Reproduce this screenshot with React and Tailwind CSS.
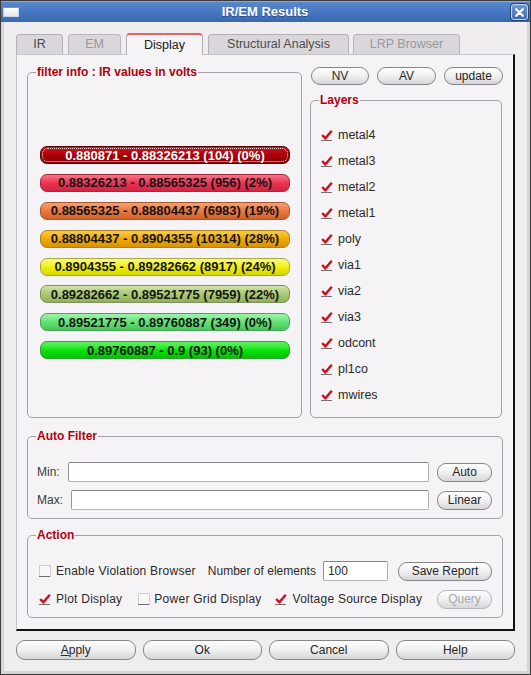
import React from "react";

const bars = [
  { label: "0.880871 - 0.88326213 (104) (0%)", cls: "from-[#d01822] via-[#a8000a] to-[#8c0008] border-[#5c0004] text-white", focus: true },
  { label: "0.88326213 - 0.88565325 (956) (2%)", cls: "from-[#f77088] via-[#ea3452] to-[#d42442] border-[#a8283c] text-[#141414]" },
  { label: "0.88565325 - 0.88804437 (6983) (19%)", cls: "from-[#f7a070] via-[#e9773f] to-[#d2622a] border-[#a85830] text-[#141414]" },
  { label: "0.88804437 - 0.8904355 (10314) (28%)", cls: "from-[#fbcc40] via-[#f2aa00] to-[#d89200] border-[#a88420] text-[#141414]" },
  { label: "0.8904355 - 0.89282662 (8917) (24%)", cls: "from-[#fcfc70] via-[#f0f000] to-[#d6d600] border-[#a8a840] text-[#141414]" },
  { label: "0.89282662 - 0.89521775 (7959) (22%)", cls: "from-[#d0e4a8] via-[#abc972] to-[#92b05a] border-[#7c9060] text-[#141414]" },
  { label: "0.89521775 - 0.89760887 (349) (0%)", cls: "from-[#9ef4ac] via-[#62e274] to-[#42c856] border-[#50a060] text-[#141414]" },
  { label: "0.89760887 - 0.9 (93) (0%)", cls: "from-[#5cf45c] via-[#08e208] to-[#00c400] border-[#30a030] text-[#141414]" },
];

const layers = ["metal4", "metal3", "metal2", "metal1", "poly", "via1", "via2", "via3", "odcont", "pl1co", "mwires"];

function Check({ checked }) {
  return (
    <svg width="12" height="12" viewBox="0 0 12 12" className="shrink-0">
      {!checked && <rect x="0.5" y="0.5" width="11" height="11" fill="#f8f8f8" stroke="#cfcdd1" />}
      <line x1="0" y1="11.5" x2="11" y2="11.5" stroke="#707070" />
      {checked && (
        <path d="M1.2 6 L4.3 9.4 L10.8 1.8" fill="none" stroke="#d0101c" strokeWidth="2.4" strokeLinejoin="round" />
      )}
    </svg>
  );
}

function Btn({ children, className = "", disabled }) {
  return (
    <button
      className={`flex shrink-0 items-center justify-center whitespace-nowrap rounded-[9px] border bg-linear-to-b from-[#ffffff] via-[#f0eff1] to-[#d6d5d8] text-[12px] leading-none ${
        disabled ? "border-[#b8b6ba] text-[#a8a6aa]" : "border-[#87858a] text-[#262626]"
      } ${className}`}
    >
      {children}
    </button>
  );
}

function Group({ title, className = "", children }) {
  return (
    <div className={`relative rounded-[5px] border border-[#a3a1a6] ${className}`}>
      <span className="absolute -top-[8px] left-[8px] bg-[#f5f3f6] px-[1px] text-[12px] font-bold leading-[14px] text-[#b0000e]">
        {title}
      </span>
      {children}
    </div>
  );
}

function Field({ className = "", value = "" }) {
  return (
    <div
      className={`flex items-center rounded-[2px] border border-[#b4b2b6] border-t-[#858387] border-l-[#959397] bg-white px-[4px] text-[12px] ${className}`}
    >
      {value}
    </div>
  );
}

export default function App() {
  return (
    <div className="flex h-[675px] w-[531px] flex-col border border-[#3b3b3b] bg-[#efedf0] font-['Liberation_Sans',Arial,sans-serif] text-[12px] text-[#222]">
      {/* title bar */}
      <div className="flex h-[21px] shrink-0 items-center border-t border-[#86a8dc] bg-linear-to-b from-[#5b88cc] via-[#4677c2] to-[#3a68b0] px-[2px]">
        <div className="h-[10px] w-[16px] rounded-[1px] border border-[#c8d4e8] border-t-[#8090a8] bg-linear-to-b from-[#ffffff] to-[#e4e6ec]" />
        <div className="flex-1 text-center text-[13px] font-bold text-white [text-shadow:0_1px_0_#2a4e88]">IR/EM Results</div>
        <div className="flex h-[16px] w-[17px] items-center justify-center rounded-[3px] border border-[#c8d8f0] bg-linear-to-b from-[#6f9ad8] to-[#3e6cb4] shadow-[0_0_0_1px_#24467e]">
          <svg width="9" height="9" viewBox="0 0 9 9">
            <path d="M1.2 1.2 L7.8 7.8 M7.8 1.2 L1.2 7.8" stroke="white" strokeWidth="2.2" strokeLinecap="round" />
          </svg>
        </div>
      </div>

      {/* body */}
      <div className="flex flex-1 flex-col border-x-[3px] border-b-[3px] border-[#d6d4d8] pl-[12px] pt-[11px]">
        {/* tabs */}
        <div className="flex h-[21px] items-end text-[12.5px]">
          <div className="flex h-[20px] w-[47px] items-center justify-center rounded-t-[4px] border border-b-0 border-[#b2b0b4] bg-[#d9d7db] text-[#4c4c4c]">IR</div>
          <div className="ml-[5px] flex h-[20px] w-[53px] items-center justify-center rounded-t-[4px] border border-b-0 border-[#b8b6ba] bg-[#d9d7db] text-[#9a989c]">EM</div>
          <div className="relative z-10 -mb-px ml-[5px] flex h-[22px] w-[77px] items-center justify-center rounded-t-[4px] border border-b-0 border-[#b2b0b4] border-t-2 border-t-[#e06464] bg-[#f5f3f6] text-[#202020]">Display</div>
          <div className="ml-[5px] flex h-[20px] w-[141px] items-center justify-center rounded-t-[4px] border border-b-0 border-[#b2b0b4] bg-[#d9d7db] text-[#4c4c4c]">Structural Analysis</div>
          <div className="ml-[4px] flex h-[20px] w-[107px] items-center justify-center rounded-t-[4px] border border-b-0 border-[#b8b6ba] bg-[#d9d7db] text-[#9a989c]">LRP Browser</div>
        </div>

        {/* tab pane */}
        <div className="flex h-[577px] w-[499px] flex-col border-l border-t border-[#c4c2c6] border-r-2 border-b-2 border-r-[#111] border-b-[#111] bg-[#f5f3f6] pl-[10px] pr-[10px]">
          <div className="flex gap-[8px]">
            <Group title="filter info : IR values in volts" className="mt-[17px] h-[346px] w-[275px]">
              <div className="flex flex-col gap-[9.9px] pl-[12px] pr-[11px] pt-[73px]">
                {bars.map((b, i) => (
                  <div
                    key={i}
                    className={`flex h-[18px] items-center justify-center rounded-[7px] border bg-linear-to-b p-[1px] text-[13px] font-bold leading-none ${b.cls}`}
                  >
                    <div
                      className={`flex h-full w-full items-center justify-center rounded-[6px] ${
                        b.focus ? "border border-dotted border-[#ffd8d8]" : ""
                      }`}
                    >
                      {b.label}
                    </div>
                  </div>
                ))}
              </div>
            </Group>

            <div className="flex w-[193px] flex-col">
              <div className="mt-[12px] flex h-[18px] gap-[8px] pl-[1px]">
                <Btn className="h-[18px] w-[58px]">NV</Btn>
                <Btn className="h-[18px] w-[59px]">AV</Btn>
                <Btn className="h-[18px] w-[59px]">update</Btn>
              </div>
              <Group title="Layers" className="mt-[15px] h-[318px] w-[192px]">
                <div className="flex flex-col pl-[10px] pt-[21px]">
                  {layers.map((l) => (
                    <div key={l} className="flex h-[26px] items-center gap-[5px] text-[12.5px] text-[#2a2a2a]">
                      <Check checked />
                      <span>{l}</span>
                    </div>
                  ))}
                </div>
              </Group>
            </div>
          </div>

          <Group title="Auto Filter" className="mt-[18px] h-[83px] w-[476px]">
            <div className="flex flex-col gap-[8px] pl-[9px] pr-[10px] pt-[25px]">
              <div className="flex h-[20px] items-center gap-[8px]">
                <span className="text-[#3a3a3a]">Min:</span>
                <Field className="h-[20px] flex-1" />
                <Btn className="h-[19px] w-[55px]">Auto</Btn>
              </div>
              <div className="flex h-[20px] items-center gap-[8px]">
                <span className="text-[#3a3a3a]">Max:</span>
                <Field className="h-[20px] flex-1" />
                <Btn className="h-[19px] w-[55px]">Linear</Btn>
              </div>
            </div>
          </Group>

          <Group title="Action" className="mt-[16px] h-[83px] w-[476px]">
            <div className="flex flex-col gap-[8px] whitespace-nowrap pl-[11px] pr-[10px] pt-[25px] text-[12px] text-[#2a2a2a]">
              <div className="flex h-[20px] items-center">
                <Check />
                <span className="ml-[5px] tracking-[0.25px]">Enable Violation Browser</span>
                <span className="ml-[12px]">Number of elements</span>
                <Field className="ml-[7px] h-[20px] w-[65px] shrink-0" value="100" />
                <Btn className="ml-auto h-[19px] w-[94px]">Save Report</Btn>
              </div>
              <div className="flex h-[20px] items-center">
                <Check checked />
                <span className="ml-[5px] tracking-[0.25px]">Plot Display</span>
                <span className="ml-[16px]"><Check /></span>
                <span className="ml-[4px] tracking-[0.25px]">Power Grid Display</span>
                <span className="ml-[13px]"><Check checked /></span>
                <span className="ml-[6px] tracking-[0.25px]">Voltage Source Display</span>
                <Btn className="ml-auto h-[19px] w-[55px]" disabled>Query</Btn>
              </div>
            </div>
          </Group>
        </div>

        {/* dialog buttons */}
        <div className="mt-[9px] grid w-[499px] grid-cols-4 gap-[7px]">
          <Btn className="h-[20px]"><span><span className="underline">A</span>pply</span></Btn>
          <Btn className="h-[20px]">Ok</Btn>
          <Btn className="h-[20px]">Cancel</Btn>
          <Btn className="h-[20px]">Help</Btn>
        </div>
      </div>
    </div>
  );
}
